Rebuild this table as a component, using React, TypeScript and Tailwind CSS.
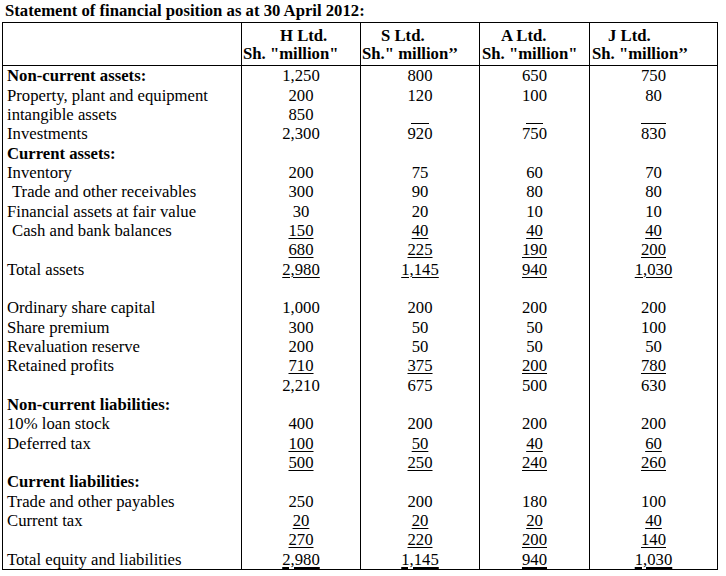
import React from "react";

type Cell = string | { line: number };
type Row = {
  label: string;
  bold?: boolean;
  indent?: boolean;
  v: Cell[];
  u?: 0 | 1 | 2;
};

const rows: Row[] = [
  { label: "Non-current assets:", bold: true, v: ["1,250", "800", "650", "750"] },
  { label: "Property, plant and equipment", v: ["200", "120", "100", "80"] },
  { label: "intangible assets", v: ["850", { line: 18 }, { line: 17 }, { line: 25 }] },
  { label: "Investments", v: ["2,300", "920", "750", "830"] },
  { label: "Current assets:", bold: true, v: ["", "", "", ""] },
  { label: "Inventory", v: ["200", "75", "60", "70"] },
  { label: "Trade and other receivables", indent: true, v: ["300", "90", "80", "80"] },
  { label: "Financial assets at fair value", v: ["30", "20", "10", "10"] },
  { label: "Cash and bank balances", indent: true, v: ["150", "40", "40", "40"], u: 1 },
  { label: "", v: ["680", "225", "190", "200"], u: 1 },
  { label: "Total assets", v: ["2,980", "1,145", "940", "1,030"], u: 1 },
  { label: "", v: ["", "", "", ""] },
  { label: "Ordinary share capital", v: ["1,000", "200", "200", "200"] },
  { label: "Share premium", v: ["300", "50", "50", "100"] },
  { label: "Revaluation reserve", v: ["200", "50", "50", "50"] },
  { label: "Retained profits", v: ["710", "375", "200", "780"], u: 1 },
  { label: "", v: ["2,210", "675", "500", "630"] },
  { label: "Non-current liabilities:", bold: true, v: ["", "", "", ""] },
  { label: "10% loan stock", v: ["400", "200", "200", "200"] },
  { label: "Deferred tax", v: ["100", "50", "40", "60"], u: 1 },
  { label: "", v: ["500", "250", "240", "260"], u: 1 },
  { label: "Current liabilities:", bold: true, v: ["", "", "", ""] },
  { label: "Trade and other payables", v: ["250", "200", "180", "100"] },
  { label: "Current tax", v: ["20", "20", "20", "40"], u: 1 },
  { label: "", v: ["270", "220", "200", "140"], u: 1 },
  { label: "Total equity and liabilities", v: ["2,980", "1,145", "940", "1,030"], u: 2 },
];

const colW = ["w-[119px] border-r", "w-[119px] border-r", "w-[110px] border-r", "w-[127px]"];

function Value({ c, u }: { c: Cell; u?: 0 | 1 | 2 }) {
  if (typeof c !== "string") {
    return (
      <span
        className="inline-block h-0 border-b border-black align-[-4px]"
        style={{ width: c.line }}
      />
    );
  }
  if (!c) return <span>&nbsp;</span>;
  if (u === 1) return <span className="underline decoration-1 underline-offset-[2px]">{c}</span>;
  if (u === 2) return <span className="underline decoration-2 underline-offset-[2px]">{c}</span>;
  return <span>{c}</span>;
}

export default function App() {
  return (
    <div className="w-[726px] h-[576px] bg-white text-black font-['Liberation_Serif','Times_New_Roman',serif] text-[16.7px]">
      <div className="h-[22px] pl-[5px] pt-[1px] font-bold leading-[19.36px] whitespace-nowrap">
        Statement of financial position as at 30 April 2012:
      </div>
      <div className="ml-[2px] w-[716px] border border-black">
        <div className="flex border-b border-black font-bold leading-[17.6px] whitespace-nowrap">
          <div className="w-[239px] border-r border-black h-[42px]" />
          <div className="w-[119px] border-r border-black pt-[4px] pb-[3px] pl-[1px]">
            <div className="pl-[37px]">H Ltd.</div>
            <div>Sh. "million"</div>
          </div>
          <div className="w-[119px] border-r border-black pt-[4px] pb-[3px] pl-[1px]">
            <div className="pl-[19px]">S Ltd.</div>
            <div>Sh." million’’</div>
          </div>
          <div className="w-[110px] border-r border-black pt-[4px] pb-[3px] pl-[2px]">
            <div className="pl-[19px]">A Ltd.</div>
            <div>Sh. "million"</div>
          </div>
          <div className="w-[127px] pt-[4px] pb-[3px] pl-[2px]">
            <div className="pl-[16px]">J Ltd.</div>
            <div>Sh. "million’’</div>
          </div>
        </div>
        {rows.map((r, i) => (
          <div key={i} className="flex leading-[19.35px] whitespace-nowrap">
            <div
              className={
                "w-[239px] border-r border-black " +
                (r.indent ? "pl-[9px] " : "pl-[4px] ") +
                (r.bold ? "font-bold" : "")
              }
            >
              {r.label || "\u00a0"}
            </div>
            {r.v.map((c, j) => (
              <div key={j} className={colW[j] + " border-black text-center"}>
                <Value c={c} u={r.u} />
              </div>
            ))}
          </div>
        ))}
      </div>
    </div>
  );
}
